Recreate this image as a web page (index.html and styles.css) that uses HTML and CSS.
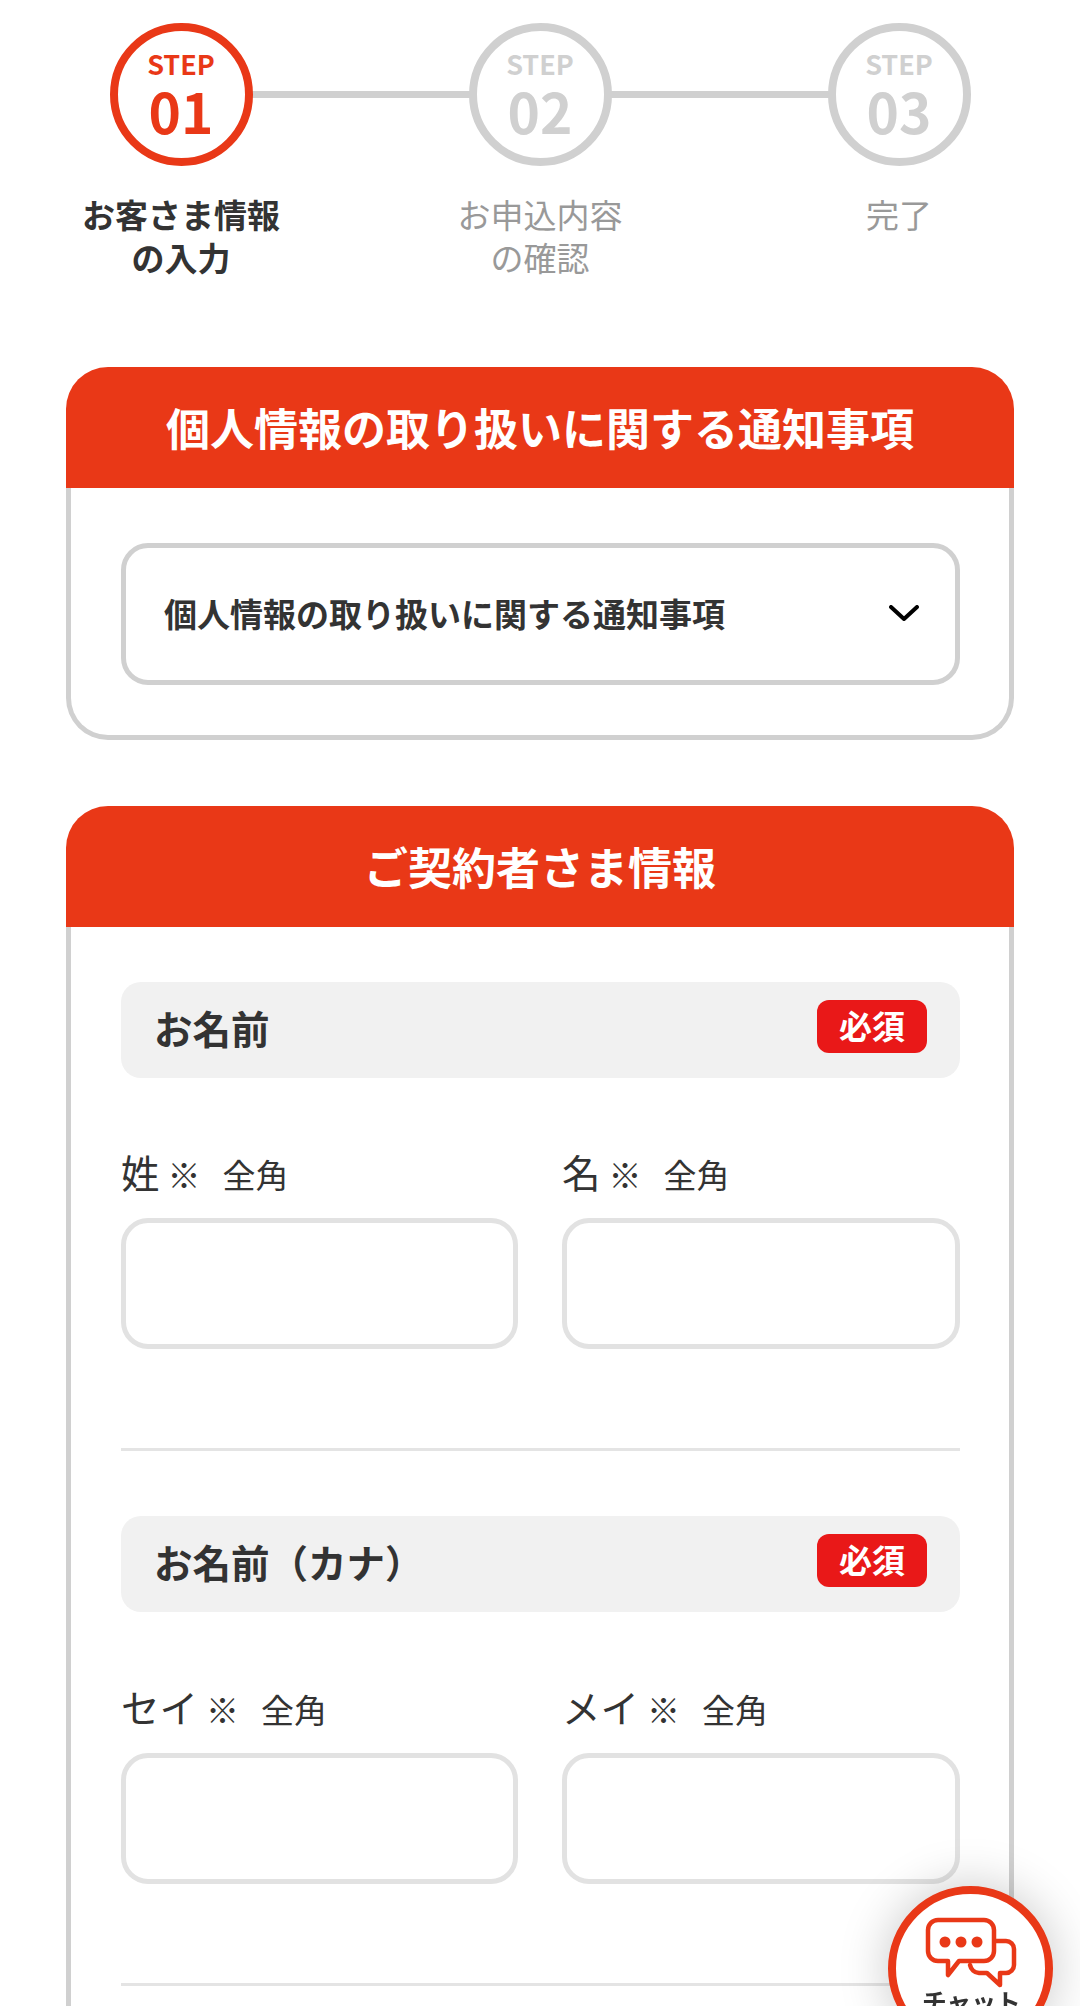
FILE: index.html
```html
<!DOCTYPE html>
<html lang="ja">
<head>
<meta charset="utf-8">
<title>お客さま情報の入力</title>
<link rel="stylesheet" href="styles.css">
</head>
<body>
<main class="page">
  <ol class="steps">
    <li class="step step-active">
      <div class="step-circle"><span class="step-word">STEP</span><span class="step-num">01</span></div>
      <p class="step-label">お客さま情報<br>の入力</p>
    </li>
    <li class="step">
      <div class="step-circle"><span class="step-word">STEP</span><span class="step-num">02</span></div>
      <p class="step-label">お申込内容<br>の確認</p>
    </li>
    <li class="step">
      <div class="step-circle"><span class="step-word">STEP</span><span class="step-num">03</span></div>
      <p class="step-label">完了</p>
    </li>
  </ol>

  <section class="card card-notice">
    <h2 class="card-title">個人情報の取り扱いに関する通知事項</h2>
    <div class="card-body">
      <div class="accordion">
        <span>個人情報の取り扱いに関する通知事項</span>
        <svg class="chevron" viewBox="0 0 30 16" width="30" height="16" aria-hidden="true"><path d="M2 2 L15 14 L28 2" fill="none" stroke="#000" stroke-width="4" stroke-linecap="round" stroke-linejoin="round"/></svg>
      </div>
    </div>
  </section>

  <section class="card">
    <h2 class="card-title">ご契約者さま情報</h2>
    <div class="card-body">
      <div class="field-group">
        <div class="field-head"><h3>お名前</h3><span class="badge">必須</span></div>
        <div class="field-row">
          <label class="field"><span class="field-label">姓<small>※</small><small class="wide">全角</small></span><input type="text"></label>
          <label class="field"><span class="field-label">名<small>※</small><small class="wide">全角</small></span><input type="text"></label>
        </div>
      </div>
      <div class="field-group">
        <div class="field-head"><h3>お名前（カナ）</h3><span class="badge">必須</span></div>
        <div class="field-row">
          <label class="field"><span class="field-label">セイ<small>※</small><small class="wide">全角</small></span><input type="text"></label>
          <label class="field"><span class="field-label">メイ<small>※</small><small class="wide">全角</small></span><input type="text"></label>
        </div>
      </div>
    </div>
  </section>
</main>

<a class="chat" href="#">
  <svg class="chat-icon" viewBox="0 0 100 80" width="100" height="80" aria-hidden="true">
    <g fill="none" stroke="#e93817" stroke-width="4.5" stroke-linecap="round" stroke-linejoin="round">
      <path d="M17 8 H63 A10 10 0 0 1 73 18 V39 A10 10 0 0 1 63 49 H38 L27 63 V49 H17 A10 10 0 0 1 7 39 V18 A10 10 0 0 1 17 8 Z"/>
      <path d="M74 29 H85 A8 8 0 0 1 93 37 V53 A8 8 0 0 1 85 61 H79 V73 L66 61 H58 A10 10 0 0 1 49 53"/>
    </g>
    <g fill="#e93817"><circle cx="24" cy="30" r="5.5"/><circle cx="40" cy="30" r="5.5"/><circle cx="56" cy="30" r="5.5"/></g>
  </svg>
  <span class="chat-text">チャット</span>
</a>
</body>
</html>
```
FILE: styles.css
```css
* { box-sizing: border-box; }
html, body { margin: 0; padding: 0; }
body {
  height: 2006px;
  overflow: hidden;
  background: #fff;
  color: #333;
  font-family: "Noto Sans CJK JP", "Noto Sans", sans-serif;
}
.page { padding: 23px 66px 0; }

/* Stepper */
.steps {
  list-style: none;
  margin: 0 -63.5px 93px -64.5px;
  padding: 0;
  display: grid;
  grid-template-columns: repeat(3, 359px);
  height: 251px;
}
.step {
  position: relative;
  display: flex;
  flex-direction: column;
  align-items: center;
}
.step:not(:last-child)::after {
  content: "";
  position: absolute;
  left: 50%;
  top: 68px;
  width: 100%;
  height: 7px;
  background: #d0d0d0;
}
.step-circle {
  position: relative;
  z-index: 1;
  width: 143px;
  height: 143px;
  border: 8px solid #d0d0d0;
  border-radius: 50%;
  background: #fff;
  color: #d0d0d0;
  display: flex;
  flex-direction: column;
  align-items: center;
  font-weight: 700;
}
.step-word { font-size: 27px; line-height: 30px; margin-top: 18px; }
.step-num { font-size: 55px; line-height: 58px; margin-top: 2px; }
.step-label {
  margin: 27px 0 0;
  font-size: 33px;
  line-height: 43px;
  text-align: center;
  color: #999;
}
.step-active .step-circle { border-color: #e93817; color: #e93817; }
.step-active .step-label { color: #333; font-weight: 700; }

/* Cards */
.card { margin-bottom: 66px; }
.card-title {
  margin: 0;
  height: 121px;
  border-radius: 42px 42px 0 0;
  background: #e93817;
  color: #fff;
  font-size: 44px;
  font-weight: 700;
  line-height: 121px;
  text-align: center;
}
.card-body {
  padding: 55px 49px 50px 50px;
  border: 5px solid #d0d0d0;
  border-top: 0;
  border-radius: 0 0 42px 42px;
  background: #fff;
}
.accordion {
  height: 142px;
  padding: 0 36px 2px 38px;
  border: 5px solid #d0d0d0;
  border-radius: 27px;
  display: flex;
  align-items: center;
  justify-content: space-between;
  font-size: 33px;
  font-weight: 700;
}

/* Fields */
.field-group { padding-bottom: 99px; border-bottom: 3px solid #e4e4e4; margin-bottom: 65px; }
.field-head {
  height: 96px;
  padding: 0 33px 7px;
  border-radius: 20px;
  background: #f1f1f1;
  display: flex;
  align-items: center;
  justify-content: space-between;
}
.field-head h3 { margin: 0; font-size: 38.5px; font-weight: 700; }
.badge {
  width: 110px;
  height: 53px;
  border-radius: 12px;
  background: #e91818;
  color: #fff;
  font-size: 33px;
  font-weight: 700;
  line-height: 50px;
  text-align: center;
}
.field-row {
  margin-top: 65px;
  display: grid;
  grid-template-columns: 397px 398px;
  justify-content: space-between;
}
.field-group + .field-group .field-row { margin-top: 66px; }
.field { display: block; }
.field-label {
  display: flex;
  align-items: baseline;
  height: 75px;
  font-size: 38.5px;
  line-height: 56px;
}
.field-label small { font-size: 33px; margin-left: 8px; }
.field-label small.wide { margin-left: 22px; }
.field input {
  display: block;
  width: 100%;
  height: 131px;
  margin: 0;
  padding: 0 20px;
  border: 5px solid #e2e2e2;
  border-radius: 27px;
  background: #fff;
  outline: 0;
}

/* Chat button */
.chat {
  position: fixed;
  left: 888px;
  top: 1886px;
  width: 165px;
  height: 165px;
  border: 8px solid #e93817;
  border-radius: 50%;
  background: #fff;
  box-shadow: 0 0 50px rgba(0, 0, 0, .22);
  display: flex;
  flex-direction: column;
  align-items: center;
  color: #333;
  text-decoration: none;
}
.chat-icon { display: block; margin-top: 18px; flex: none; margin-bottom: -6px; }
.chat-text { font-size: 24.75px; font-weight: 700; line-height: 30px; margin-left: 2px; }
```
